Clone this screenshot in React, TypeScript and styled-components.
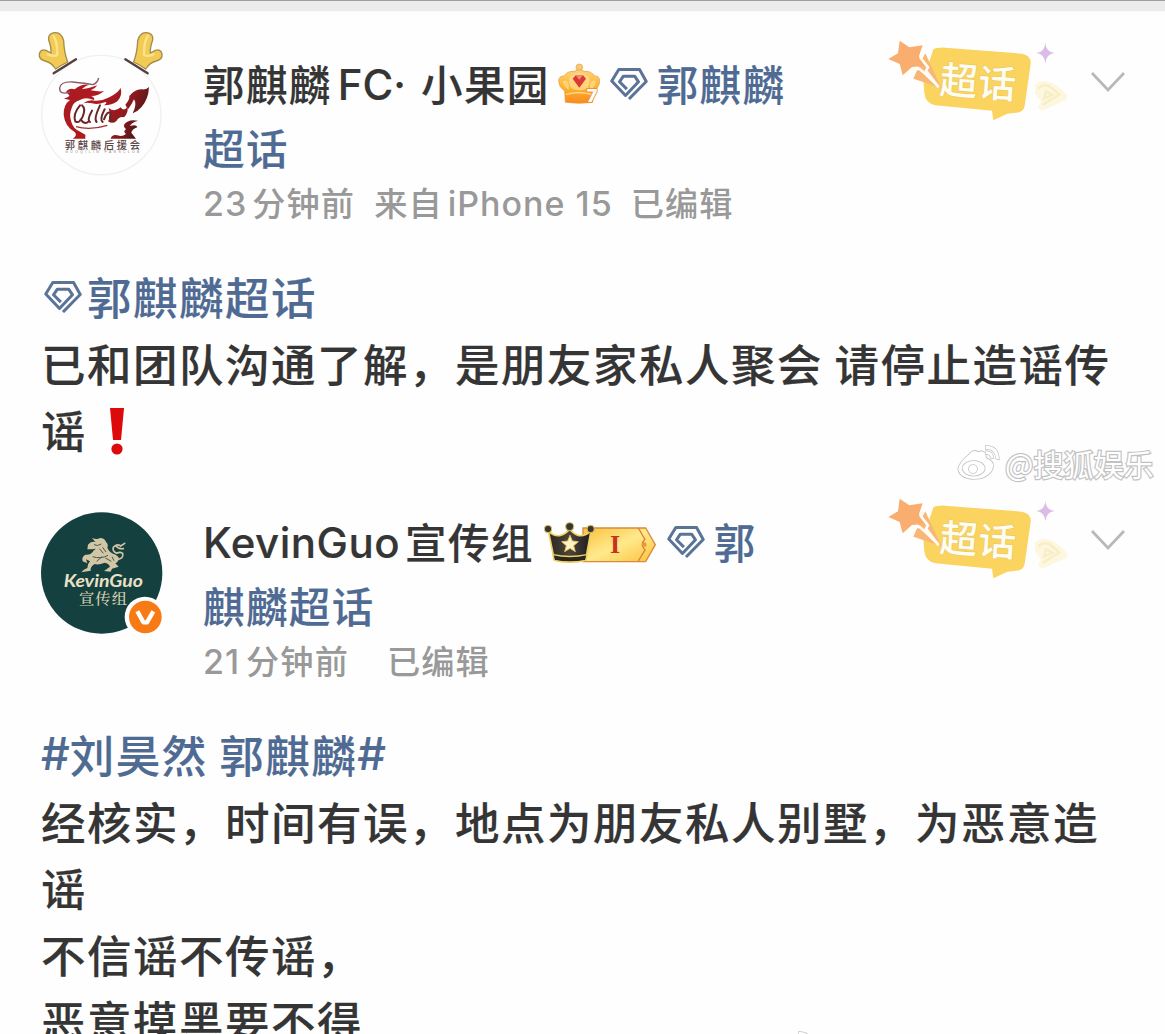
import React from 'react'
import styled, { createGlobalStyle } from 'styled-components'

const Diamond = ({ size = 38 }: { size?: number }) => (
  <DiamondSvg width={size} height={size * 0.88} viewBox="0 0 108 95">
    <path d="M54 91 L103 41 L84 7 H25 L5 40 L44 81 L81 42 L70 26 H38 L27 42 L48 63" />
  </DiamondSvg>
)

const CrownBadge = () => (
  <Crown width="42" height="42" viewBox="0 0 126 126">
    <defs>
      <linearGradient id="crown" x1="0" y1="0" x2="0" y2="1">
        <stop offset="0" stopColor="#ffd27a" />
        <stop offset="0.5" stopColor="#ffb52e" />
        <stop offset="1" stopColor="#f98a1f" />
      </linearGradient>
    </defs>
    <circle cx="64" cy="13" r="10" fill="#f6c873" stroke="#e0a050" strokeWidth="2" />
    <path d="M22 118 L20 84 Q2 72 2 54 Q3 38 18 39 Q28 24 48 25 Q64 16 80 25 Q100 24 110 39 Q125 38 125 55 Q124 74 106 84 L104 118 Q64 124 22 118Z" fill="url(#crown)" stroke="#e99a3c" strokeWidth="2" />
    <path d="M36 40 Q50 30 64 30 Q78 30 92 40 Q98 56 90 74 Q64 90 38 74 Q30 56 36 40Z" fill="#ffe09a" opacity="0.7" />
    <path d="M14 56 Q22 48 30 58 Q34 70 32 80 Q16 72 14 56Z M114 56 Q106 48 98 58 Q94 70 96 80 Q112 72 114 56Z" fill="#ffd98a" opacity="0.8" />
    <path d="M24 94 Q62 84 102 94" fill="none" stroke="#ffdf96" strokeWidth="4" />
    <path d="M44 47 L53 37 H75 L84 47 L64 74Z" fill="#d93a31" />
    <path d="M53 37 L64 50 L75 37Z" fill="#f58a72" />
    <text x="86" y="118" fontSize="54" fontWeight="800" fontFamily="Inter, sans-serif" fill="#fff" stroke="#f08c1e" strokeWidth="5" paintOrder="stroke">7</text>
  </Crown>
)

const LevelBadge = () => (
  <Level width="116" height="44" viewBox="0 0 348 132">
    <defs>
      <linearGradient id="gold" x1="0" y1="0" x2="1" y2="1">
        <stop offset="0" stopColor="#f9c13c" />
        <stop offset="0.5" stopColor="#ffe98c" />
        <stop offset="1" stopColor="#fcc23a" />
      </linearGradient>
      <linearGradient id="dark" x1="0" y1="0" x2="1" y2="0">
        <stop offset="0" stopColor="#2a2622" />
        <stop offset="0.5" stopColor="#4b443c" />
        <stop offset="1" stopColor="#1e1c20" />
      </linearGradient>
    </defs>
    <path d="M120 21 H308 L337 71 L308 122 H120Z" fill="url(#gold)" stroke="#d98a3c" strokeWidth="4" />
    <path d="M286 21 L306 55 Q290 71 306 87 L286 120" fill="none" stroke="#d9803a" strokeWidth="4" />
    <circle cx="304" cy="71" r="7" fill="#e59a40" />
    <path d="M16 29 L34 117 Q80 130 128 117 L144 29 Q128 46 108 44 Q92 40 80 24 Q68 40 50 44 Q30 46 16 29Z" fill="url(#dark)" stroke="#efcf5e" strokeWidth="5" strokeLinejoin="round" />
    <path d="M30 101 Q80 112 132 101 L128 118 Q80 128 34 118Z" fill="#29251f" stroke="#efcf5e" strokeWidth="4" />
    <circle cx="15" cy="24" r="11" fill="#3b362b" stroke="#d6c36b" strokeWidth="3" />
    <circle cx="80" cy="17" r="12" fill="#3b362b" stroke="#d6c36b" strokeWidth="3" />
    <circle cx="143" cy="24" r="11" fill="#3b362b" stroke="#d6c36b" strokeWidth="3" />
    <path d="M81 43 L88 60 L106 62 L92 74 L97 92 L81 82 L65 92 L70 74 L56 62 L74 60Z" fill="#fff3c8" stroke="#e6ba58" strokeWidth="3" />
    <text x="217" y="96" textAnchor="middle" fontSize="78" fontWeight="700" fontFamily="'Liberation Serif', serif" fill="#c8321e">I</text>
  </Level>
)

const Antler = () => (
  <g>
    <path d="M101 160 L168 118" stroke="#55403a" strokeWidth="7" strokeLinecap="round" />
    <path d="M107 147 Q94 127 75 123 Q56 118 58 102 Q62 86 78 91 L93 99 Q94 82 86 60 Q83 40 104 38 Q124 36 131 62 Q132 96 143 126 Q126 134 107 147Z" fill="#f2cb55" stroke="#a58b4c" strokeWidth="4" />
    <path d="M100 48 Q112 62 112 104 Q104 112 84 103" fill="none" stroke="#fbe28c" strokeWidth="7" strokeLinecap="round" />
  </g>
)

const FanAvatar = () => (
  <AvatarSvg viewBox="0 0 510 510">
    <defs>
      <linearGradient id="qilin" gradientUnits="userSpaceOnUse" x1="130" y1="200" x2="387" y2="320">
        <stop offset="0" stopColor="#a81c22" />
        <stop offset="0.4" stopColor="#b3191f" />
        <stop offset="0.7" stopColor="#8e1a1e" />
        <stop offset="1" stopColor="#3a1517" />
      </linearGradient>
    </defs>
    <circle cx="244" cy="285" r="179" fill="#fefefe" stroke="#f0f0f0" strokeWidth="4" />
    <Antler />
    <g transform="translate(484 0) scale(-1 1)"><Antler /></g>
    <g fill="url(#qilin)">
      <path d="M138 216 Q148 202 164 208 Q184 190 208 194 Q190 200 186 208 Q212 204 232 196 Q226 206 212 211 Q240 216 252 213 Q236 228 214 228 Q226 234 222 240 Q196 230 180 240 Q160 246 156 262 Q146 284 154 306 Q160 326 178 334 L196 344 V356 H158 Q174 346 164 336 Q134 318 131 284 Q130 254 150 240 L132 236 Q148 232 148 226Z" />
      <path d="M190 250 Q206 238 224 242 Q246 244 268 232 Q292 220 302 204 Q308 228 292 244 Q276 256 252 256 Q264 248 256 246 Q232 256 216 250 Q200 246 190 250Z" />
      <path d="M266 264 Q284 278 302 262 Q312 276 322 260 Q326 278 312 292 Q298 288 290 302 Q278 314 264 304 Q274 292 266 264Z" />
      <path d="M316 254 Q330 238 328 228 Q346 206 366 208 Q380 210 387 201 Q386 236 364 262 Q352 276 338 280 Q352 252 342 238 Q336 252 324 268Z" />
      <path d="M312 314 Q324 296 354 302 Q334 308 330 318 Q350 312 352 322 Q336 328 334 338 L348 356 H272 Q276 342 292 346 Q306 352 318 342 Q308 334 318 328 Q310 322 312 314Z" />
    </g>
    <path d="M150 216 Q118 226 119 204 Q122 184 158 186 Q198 190 218 194 Q232 190 236 174" fill="none" stroke="#8b5d66" strokeWidth="4" />
    <path d="M180 256 Q158 282 166 304 Q178 312 188 290 Q198 266 186 256 M182 298 Q194 316 206 304 M216 272 Q200 300 210 306 M240 256 Q220 298 230 306 M254 268 Q238 298 248 306 M252 298 Q262 270 272 280 Q266 304 278 302" fill="none" stroke="#6a2628" strokeWidth="6" strokeLinecap="round" />
    <path d="M168 320 Q210 332 262 316" fill="none" stroke="#a22d30" strokeWidth="4" />
    <text x="134" y="387" textLength="226" fontSize="31" fontFamily="'Noto Sans CJK SC', sans-serif" fill="#5b4444">郭麒麟后援会</text>
    <text x="136" y="400" textLength="222" fontSize="10" fontFamily="'Liberation Sans', sans-serif" fill="#8c7e7e">GUOQILIN FANSCLUB</text>
  </AvatarSvg>
)

const KevinAvatar = () => (
  <AvatarSvg viewBox="0 -36 510 510">
    <circle cx="245" cy="249" r="182" fill="#14403f" />
    <g fill="#d3c6a4">
      <path d="M204 164 Q212 152 226 156 L216 144 Q232 150 240 144 Q254 144 258 156 Q266 162 262 174 Q268 186 276 190 Q290 194 296 202 Q298 214 286 220 L296 230 L276 236 L272 245 L252 243 L270 230 Q266 220 254 218 Q236 226 224 222 Q210 230 212 242 L184 247 Q190 238 202 234 Q202 222 210 214 L198 208 L202 220 L188 214 Q184 200 196 194 Q210 196 216 188 Q220 180 228 176 Q216 178 202 178Z" />
    </g>
    <path d="M288 208 Q312 208 308 190 Q300 184 290 190 Q276 184 280 172 Q290 160 302 168 L314 160 M288 168 Q296 178 310 176" fill="none" stroke="#d3c6a4" strokeWidth="5" strokeLinecap="round" />
    <path d="M222 164 Q232 170 244 162 M238 176 L250 190 M248 172 L258 186 M218 200 Q242 208 264 196 M230 214 L246 200 M256 204 L274 214 M276 200 L282 212" fill="none" stroke="#3f5d53" strokeWidth="3" />
    <text x="131" y="290" textLength="238" lengthAdjust="spacingAndGlyphs" fontSize="50" fontStyle="italic" fontWeight="700" fontFamily="Lato, sans-serif" fill="#e9e0c5">KevinGuo</text>
    <text x="177" y="343" textLength="144" fontSize="46" fontWeight="500" fontFamily="'Noto Serif CJK SC', 'Noto Sans CJK SC', serif" fill="#d8cfb0">宣传组</text>
    <circle cx="375" cy="381" r="61" fill="#fefefe" />
    <circle cx="376" cy="381" r="49" fill="#f87a14" />
    <path d="M352 364 L370 397 H381 L400 364" fill="none" stroke="#fff" strokeWidth="13" strokeLinejoin="round" />
  </AvatarSvg>
)

const TopicBadge = () => (
  <TopicSvg width="200" height="120" viewBox="0 0 600 360">
    <path d="M190 88 Q200 82 226 83 L456 101 Q484 106 482 132 L464 258 Q460 278 438 278 L412 281 L370 301 L366 272 L196 256 Q166 250 163 220 L160 180Z" fill="#fad45f" />
    <path d="M166 100 L214 204 L130 176 L150 130Z" fill="#f8b777" />
    <path d="M89 62 L118 82 L158 76 L147 108 L164 138 L126 141 L98 166 L89 132 L55 117 L84 100Z" fill="#f9ad6f" />
    <path d="M160 84 L152 114 L174 142 L168 152 L206 202 M108 170 Q120 148 148 146 L164 160 L204 198" fill="none" stroke="#fffdf4" strokeWidth="8" strokeLinejoin="round" />
    <TopicText x="207" y="220" transform="rotate(4 207 220)">超话</TopicText>
    <path d="M526 68 Q528 96 554 99 Q528 102 526 130 Q524 102 499 99 Q524 96 526 68Z" fill="#d9bde6" />
    <path d="M494 194 Q510 178 538 186 Q560 192 592 226 Q594 240 580 244 L516 272 L504 262 L514 246 L496 222Z" fill="#fcf7de" />
    <path d="M506 206 Q514 192 538 198 L568 224 L518 254 M528 214 L548 224 L522 236Z" fill="none" stroke="#f8edc4" strokeWidth="7" />
  </TopicSvg>
)

const WeiboMark = () => (
  <svg width="44" height="38" viewBox="0 0 132 114">
    <g fill="#fff" stroke="#c2c2c2" strokeWidth="5">
      <path d="M34 34 Q48 14 62 24 Q82 18 86 32 Q84 42 94 46 Q116 56 104 80 Q88 104 50 105 Q8 102 4 76 Q6 56 34 34Z" />
      <ellipse cx="50" cy="73" rx="33" ry="22" />
      <circle cx="48" cy="75" r="12" />
      <path d="M86 6 Q124 4 126 46 L117 44 Q116 14 86 15Z" strokeWidth="4" />
      <path d="M86 22 Q108 20 109 42 L101 42 Q100 29 86 30Z" strokeWidth="4" />
    </g>
  </svg>
)

interface PostProps {
  avatar: React.ReactNode
  name: React.ReactNode
  topic: string
  meta: React.ReactNode
  children: React.ReactNode
}

const Post = ({ avatar, name, topic, meta, children }: PostProps) => (
  <PostBox>
    <Header>
      {avatar}
      <Info>
        <NameLine>{name}</NameLine>
        <NameLine><Topic>{topic}</Topic></NameLine>
        <Meta>{meta}</Meta>
      </Info>
      <TopicBadge />
      <Chevron width="38" height="24" viewBox="0 0 38 24">
        <path d="M3 3 L19 20 L35 3" />
      </Chevron>
    </Header>
    <Body>{children}</Body>
  </PostBox>
)

const App = () => {
  return (
    <Page>
      <GlobalStyle />
      <TopBar />
      <Post
        avatar={<FanAvatar />}
        name={<>
          <span>郭麒麟</span>
          <Latin $left={6} $size={42}>FC·</Latin>
          <Part $left={15}>小果园</Part>
          <CrownBadge />
          <Diamond />
          <Topic>郭麒麟</Topic>
        </>}
        topic="超话"
        meta={<>
          <Latin $size={34} $spacing={1}>23</Latin>
          <Part $left={5}>分钟前</Part>
          <Part $left={19}>来自</Part>
          <Latin $left={5} $size={34} $spacing={1}>iPhone 15</Latin>
          <Part $left={18}>已编辑</Part>
        </>}
      >
        <Line $link><Diamond /><span>郭麒麟超话</span></Line>
        <Line>已和团队沟通了解，是朋友家私人聚会 请停止造谣传</Line>
        <Line>
          谣
          <Exclaim width="18" height="50" viewBox="0 0 18 50">
            <path d="M2 2 H16 L13 34 H5Z" />
            <circle cx="9" cy="43" r="5.6" />
          </Exclaim>
        </Line>
      </Post>
      <Post
        avatar={<KevinAvatar />}
        name={<>
          <Latin $size={42} $spacing={0.5}>KevinGuo</Latin>
          <Part $left={5}>宣传组</Part>
          <LevelBadge />
          <Diamond />
          <Topic>郭</Topic>
        </>}
        topic="麒麟超话"
        meta={<>
          <Latin $size={34} $spacing={1}>21</Latin>
          <Part $left={6}>分钟前</Part>
          <Part $left={38}>已编辑</Part>
        </>}
      >
        <Line $link><Hash>#</Hash>刘昊然 郭麒麟<Hash>#</Hash></Line>
        <Line>经核实，时间有误，地点为朋友私人别墅，为恶意造</Line>
        <Line>谣</Line>
        <Line>不信谣不传谣，</Line>
        <Line>恶意摸黑要不得</Line>
      </Post>
      <Watermark $left={957} $top={444}>
        <WeiboMark />
        <span>@搜狐娱乐</span>
      </Watermark>
      <Watermark $left={770} $top={1030}>
        <WeiboMark />
      </Watermark>
    </Page>
  )
}

export default App

const GlobalStyle = createGlobalStyle`
    body {
        margin: 0;
        background-color: #fefefe;
    }
`
const Page = styled.div`
    position: relative;
    width: 1165px;
    height: 1034px;
    overflow: hidden;
    background-color: #fefefe;
    color: #353535;
    font-family: "Noto Sans CJK SC", sans-serif;
    font-weight: 500;
    white-space: nowrap;
`
const TopBar = styled.div`
    box-sizing: border-box;
    height: 12px;
    background-color: #ececec;
    border-top: 1px solid #9f9f9f;
    border-bottom: 1px solid #f8f8f8;
`
const PostBox = styled.article`
    height: 458px;
`
const Header = styled.header`
    display: flex;
    align-items: flex-start;
    height: 251px;
    padding-left: 20px;
    box-sizing: border-box;
`
const AvatarSvg = styled.svg`
    flex: none;
    width: 170px;
    height: 170px;
    margin-top: 8px;
`
const Info = styled.div`
    flex: none;
    width: 680px;
    padding: 39px 0 0 13px;
    box-sizing: border-box;
`
const NameLine = styled.div`
    display: flex;
    align-items: center;
    height: 64px;
    font-size: 41.5px;
    letter-spacing: 1.4px;
    line-height: 64px;
    -webkit-text-stroke: 0.15px currentColor;
`
const Topic = styled.span`
    color: #4f6b93;
`
const Part = styled.span<{ $left: number }>`
    margin-left: ${(p) => p.$left}px;
`
const Latin = styled.span<{ $left?: number; $size: number; $spacing?: number }>`
    margin-left: ${(p) => p.$left ?? 0}px;
    padding-top: 3px;
    font-family: Inter, "Liberation Sans", sans-serif;
    font-size: ${(p) => p.$size}px;
    font-weight: 550;
    letter-spacing: ${(p) => p.$spacing ?? 0}px;
`
const Hash = styled.span`
    font-family: Inter, "Liberation Sans", sans-serif;
    font-size: 45px;
    font-weight: 550;
    letter-spacing: 0;
`
const Meta = styled.div`
    display: flex;
    align-items: center;
    height: 46px;
    color: #999;
    font-size: 33.2px;
    letter-spacing: 1.1px;
    line-height: 46px;
`
const DiamondSvg = styled.svg`
    flex: none;
    margin: 2px 9px 0 10px;
    fill: none;
    stroke: #5a7396;
    stroke-width: 8.5px;
    stroke-linejoin: round;
`
const Crown = styled.svg`
    flex: none;
    margin: 2px 0 0 8px;
`
const Level = styled.svg`
    flex: none;
    margin: 4px -2px 0 9px;
`
const TopicSvg = styled.svg`
    flex: none;
    margin-top: 8px;
`
const TopicText = styled.text`
    fill: #fffdf2;
    stroke: #ecc968;
    stroke-width: 4px;
    paint-order: stroke;
    font-size: 113px;
    font-weight: 500;
    letter-spacing: 3px;
`
const Chevron = styled.svg`
    flex: none;
    margin: 58px 0 0 19px;
    fill: none;
    stroke: #b9b9bd;
    stroke-width: 2.8px;
`
const Body = styled.div`
    padding-left: 41px;
    font-size: 44.5px;
    letter-spacing: 1.5px;
    -webkit-text-stroke: 0.15px currentColor;
`
const Line = styled.div<{ $link?: boolean }>`
    display: flex;
    align-items: center;
    height: 66.5px;
    line-height: 66.5px;
    white-space: pre;
    color: ${(p) => (p.$link ? '#4f6b93' : '#353535')};

    ${DiamondSvg} {
        margin: 0 5px 0 3px;
    }
`
const Exclaim = styled.svg`
    margin: 3px 0 0 21px;
    fill: #dc0a0a;
`
const Watermark = styled.div<{ $left: number; $top: number }>`
    position: absolute;
    left: ${(p) => p.$left}px;
    top: ${(p) => p.$top}px;
    display: flex;
    align-items: center;
    gap: 4px;
    height: 38px;
    color: #fff;
    font-size: 30px;
    font-weight: 400;
    line-height: 38px;
    -webkit-text-stroke: 2.4px #c2c2c2;
    paint-order: stroke fill;
`
